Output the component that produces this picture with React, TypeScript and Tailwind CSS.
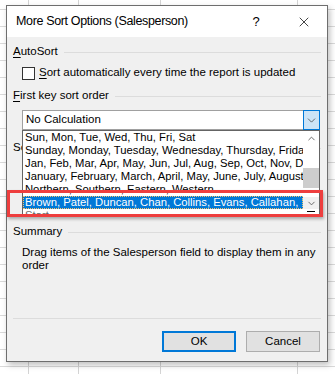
import { X, ChevronDown, ChevronUp } from 'lucide-react';

const listItems = [
  'Sun, Mon, Tue, Wed, Thu, Fri, Sat',
  'Sunday, Monday, Tuesday, Wednesday, Thursday, Friday, Saturday',
  'Jan, Feb, Mar, Apr, May, Jun, Jul, Aug, Sep, Oct, Nov, Dec',
  'January, February, March, April, May, June, July, August, September',
  'Northern, Southern, Eastern, Western',
  'Brown, Patel, Duncan, Chan, Collins, Evans, Callahan, Smith',
  'Start',
];

function GroupLabel({ children }: { children: React.ReactNode }) {
  return (
    <div className="flex items-center h-[16px] gap-[6px]">
      <span className="whitespace-nowrap">{children}</span>
      <div className="flex-1 h-px bg-[#dcdcdc] mr-[6px]" />
    </div>
  );
}

export default function App() {
  return (
    <div
      className="w-[335px] h-[374px] overflow-hidden bg-white pt-[5px] pl-[6px] text-[11.5px] text-black bg-[linear-gradient(to_right,transparent_28px,#d4d4d4_28px,#d4d4d4_29px,transparent_29px,transparent_78px,#d4d4d4_78px,#d4d4d4_79px,transparent_79px,transparent_160px,#d4d4d4_160px,#d4d4d4_161px,transparent_161px,transparent_297px,#d4d4d4_297px,#d4d4d4_298px,transparent_298px),repeating-linear-gradient(to_bottom,transparent_0px,transparent_9px,#dadada_9px,#dadada_10px,transparent_10px,transparent_17px)]"
      style={{ fontFamily: '"Liberation Sans", Arial, sans-serif' }}
    >
      <div className="w-[322px] h-[357px] border border-[#6e6e6e] bg-[#f0f0f0] flex flex-col shadow-[2px_3px_6px_rgba(0,0,0,0.25)]">
        {/* title bar */}
        <div className="h-[31px] bg-white flex items-center pl-[9px] shrink-0">
          <span className="text-[12.5px] tracking-[-0.35px] flex-1">More Sort Options (Salesperson)</span>
          <span className="text-[13px] w-[12px] text-center mr-[34px]">?</span>
          <X size={16} strokeWidth={1.1} className="mr-[15px]" />
        </div>

        {/* body */}
        <div className="relative flex-1 flex flex-col pl-[6px]">
          <div className="mt-[7px]">
            <GroupLabel>
              <span className="underline underline-offset-2">A</span>utoSort
            </GroupLabel>
          </div>
          <div className="mt-[5px] h-[16px] flex items-center pl-[9px] gap-[4px]">
            <div className="w-[13px] h-[13px] border border-[#333] bg-white" />
            <span>
              <span className="underline underline-offset-2">S</span>ort automatically every time the report is updated
            </span>
          </div>
          <div className="mt-[7px]">
            <GroupLabel>
              <span className="underline underline-offset-2">F</span>irst key sort order
            </GroupLabel>
          </div>
          <div className="mt-[6px] ml-[9px] w-[298px] h-[20px] border border-[#a0a0a0] bg-white flex items-center">
            <span className="flex-1 pl-[3px]">No Calculation</span>
            <div className="w-[17px] h-[20px] -mr-px border border-[#0078d7] bg-[#cce4f7] flex items-center justify-center">
              <ChevronDown size={13} strokeWidth={1.3} className="text-[#333]" />
            </div>
          </div>
          <div className="mt-[10px] h-[84px]">
            <GroupLabel>Sort by</GroupLabel>
          </div>
          <div>
            <GroupLabel>Summary</GroupLabel>
          </div>
          <div className="mt-[6px] pl-[9px] w-[306px] leading-[13px]">
            Drag items of the Salesperson field to display them in any order
          </div>
          <div className="flex-1" />
          <div className="h-px bg-[#dcdcdc] mr-[6px]" />
          <div className="mt-[12px] mb-[9px] flex justify-end gap-[10px] pr-[7px]">
            <button className="w-[74px] h-[21px] border-2 border-[#0078d7] bg-[#e1e1e1] flex items-center justify-center">
              OK
            </button>
            <button className="w-[74px] h-[21px] border border-[#adadad] bg-[#e1e1e1] flex items-center justify-center">
              Cancel
            </button>
          </div>

          {/* dropped-down list overlays the dialog */}
          <div className="absolute left-[15px] top-[93px] w-[298px] h-[85px] border border-[#646464] bg-white overflow-hidden flex text-[11.25px]">
            <div className="flex-1 overflow-hidden">
              {listItems.map((item, i) => (
                <div
                  key={item}
                  className={`h-[13px] leading-[13px] whitespace-nowrap pl-[2px] ${
                    i === 5 ? 'bg-[#0078d7] text-white outline-1 outline-dotted outline-[#f5c26b] -outline-offset-1' : i === 6 ? 'text-[#666]' : ''
                  }`}
                >
                  {item}
                </div>
              ))}
            </div>
            <div className="w-[16px] flex flex-col items-center shrink-0 bg-white">
              <div className="h-[14px] flex items-center justify-center">
                <ChevronUp size={11} strokeWidth={2} className="text-[#606060]" />
              </div>
              <div className="h-[23px]" />
              <div className="w-full h-[20px] bg-[#cdcdcd]" />
              <div className="h-[9px]" />
              <div className="w-full h-[12px] bg-[#f0f0f0] flex items-center justify-center">
                <ChevronDown size={11} strokeWidth={2} className="text-[#606060]" />
              </div>
              <div className="mt-[2px] w-[8px] h-[1px] bg-black" />
            </div>
          </div>

          {/* red highlight annotation */}
          <div className="absolute left-0 top-[153px] w-[316px] h-[27px] border-[3px] border-[#ee3e3e] shadow-[1px_2px_3px_rgba(0,0,0,0.3)]" />
        </div>
      </div>
    </div>
  );
}
